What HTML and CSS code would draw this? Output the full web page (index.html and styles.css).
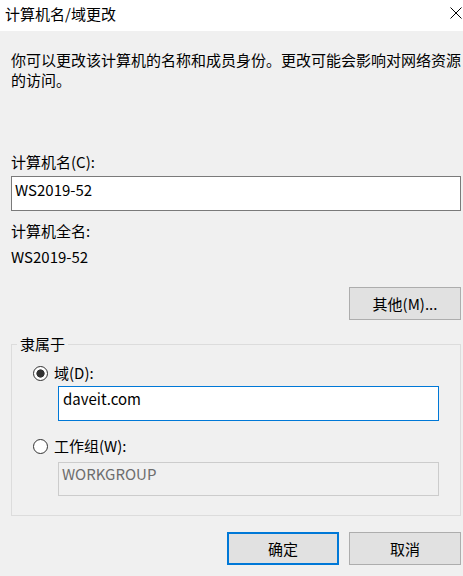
FILE: index.html
```html
<!DOCTYPE html>
<html lang="zh-CN">
<head>
<meta charset="utf-8">
<title>计算机名/域更改</title>
<link rel="stylesheet" href="styles.css">
</head>
<body>
<div class="titlebar">
  <span class="title">计算机名/域更改</span>
  <svg class="close" width="12" height="12" viewBox="0 0 12 12"><path d="M0.5 0.5 L11.5 11.5 M11.5 0.5 L0.5 11.5" stroke="#000" stroke-width="1" fill="none"/></svg>
</div>
<main class="content">
  <p class="desc">你可以更改该计算机的名称和成员身份。更改可能会影响对网络资源<br>的访问。</p>
  <div class="label label-first">计算机名(C):</div>
  <div class="edit edit-wide">WS2019-52</div>
  <div class="label label-full">计算机全名:</div>
  <div class="value">WS2019-52</div>
  <div class="row-right">
    <button class="btn">其他(M)...</button>
  </div>
  <fieldset class="group">
    <legend class="legend">隶属于</legend>
    <label class="radio-row radio-first">
      <span class="radio radio-on"></span>
      <span>域(D):</span>
    </label>
    <div class="edit edit-inner edit-focus">daveit.com</div>
    <label class="radio-row radio-second">
      <span class="radio"></span>
      <span>工作组(W):</span>
    </label>
    <div class="edit edit-inner edit-disabled">WORKGROUP</div>
  </fieldset>
  <div class="footer">
    <button class="btn btn-default">确定</button>
    <button class="btn">取消</button>
  </div>
</main>
</body>
</html>
```
FILE: styles.css
```css
* { box-sizing: border-box; }
html, body {
  margin: 0;
  padding: 0;
}
body {
  background: #f0f0f0;
  font-family: "Noto Sans CJK SC", "Noto Sans", sans-serif;
  font-size: 15px;
  line-height: 20px;
  color: #000;
  width: 463px;
  height: 576px;
  overflow: hidden;
}
.titlebar {
  height: 31px;
  background: #fff;
  display: flex;
  align-items: flex-start;
  justify-content: space-between;
  padding: 4px 1px 0 5px;
}
.title {
  line-height: 20px;
}
.close {
  margin-top: 3px;
  display: block;
}
.content {
  display: flex;
  flex-direction: column;
  padding: 0 0 0 11px;
}
.desc {
  margin: 19px 0 0 0;
  width: 452px;
  white-space: nowrap;
}
.label-first { margin-top: 62px; }
.label-full { margin-top: 10px; }
.edit {
  background: #fff;
  border: 1px solid #7a7a7a;
  height: 35px;
  padding: 3px 3px 0 3px;
  line-height: 20px;
}
.edit-wide {
  width: 450px;
  margin-top: 4px;
}
.value { margin-top: 6px; }
.row-right {
  margin-top: 20px;
  width: 450px;
  display: flex;
  justify-content: flex-end;
}
.btn {
  width: 112px;
  height: 33px;
  background: #e1e1e1;
  border: 1px solid #adadad;
  font-family: inherit;
  font-size: 15px;
  line-height: 20px;
  color: #000;
  padding: 0;
  border-radius: 0;
}
.btn-default {
  border: 2px solid #0078d7;
}
.group {
  margin: 14px 0 0 0;
  width: 450px;
  border: 1px solid #dcdcdc;
  padding: 0 0 19px 0;
  min-width: 0;
}
.legend {
  margin-left: 5px;
  padding: 0 3px;
  line-height: 20px;
}
.radio-row {
  display: flex;
  align-items: center;
  gap: 6px;
  height: 20px;
  padding-left: 21px;
}
.radio-first { margin-top: 9px; }
.radio-second { margin-top: 15px; }
.radio {
  flex: 0 0 15px;
  width: 15px;
  height: 15px;
  border: 1px solid #333;
  border-radius: 50%;
  background: #fff;
}
.radio-on {
  background: radial-gradient(circle, #333 0, #333 3.8px, #fff 4.4px);
}
.edit-inner {
  width: 381px;
  margin-left: 46px;
}
.edit-focus {
  margin-top: 3px;
  border-color: #0078d7;
  padding-left: 4px;
  padding-top: 2px;
}
.edit-disabled {
  margin-top: 6px;
  height: 34px;
  padding-top: 1px;
  background: #f0f0f0;
  border-color: #cccccc;
  color: #6d6d6d;
}
.footer {
  margin-top: 16px;
  width: 450px;
  display: flex;
  justify-content: flex-end;
  gap: 10px;
}
```
